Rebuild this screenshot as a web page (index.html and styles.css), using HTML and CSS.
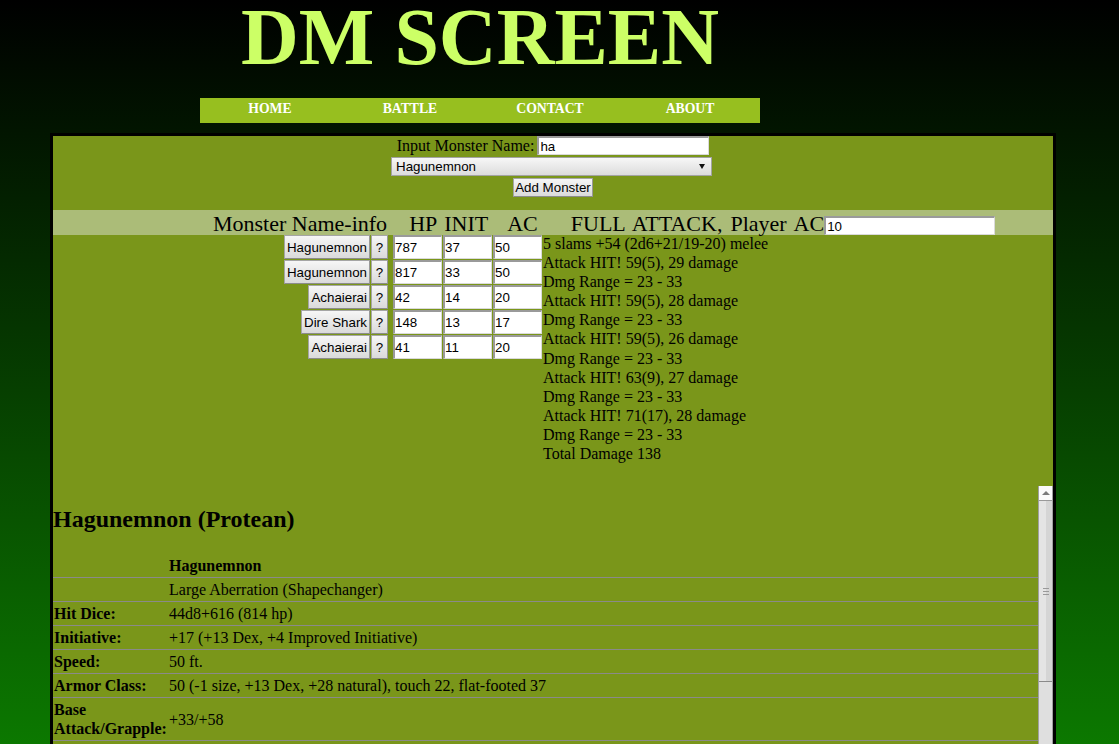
FILE: index.html
```html
<!DOCTYPE html>
<html lang="en">
<head>
<meta charset="utf-8">
<title>DM Screen</title>
<link rel="stylesheet" href="styles.css">
</head>
<body>
<header class="masthead">
  <h1 class="title">DM SCREEN</h1>
  <nav class="nav"><a href="#">HOME</a><a href="#">BATTLE</a><a href="#">CONTACT</a><a href="#">ABOUT</a></nav>
</header>
<main class="panel">
  <form class="add-form">
    <div class="form-row">
      <label for="mname" class="form-label">Input Monster Name:</label>
      <input id="mname" class="text-input name-input" type="text" value="ha">
    </div>
    <div class="form-row">
      <span class="select-wrap"><select class="monster-select"><option>Hagunemnon</option></select></span>
    </div>
    <div class="form-row">
      <button type="button" class="btn add-btn">Add Monster</button>
    </div>
  </form>
  <div class="head-strip"><span class="h-name">Monster Name-info</span><span class="h-hp">HP</span><span class="h-init">INIT</span><span class="h-ac">AC</span><span class="h-full">FULL ATTACK, Player AC</span><input class="text-input ac-input" type="text" value="10"></div>
  <div class="battle">
    <div class="roster">
      <div class="mrow"><button type="button" class="btn name-btn">Hagunemnon</button><button type="button" class="btn q-btn">?</button><input class="text-input stat-input hp" type="text" value="787"><input class="text-input stat-input" type="text" value="37"><input class="text-input stat-input" type="text" value="50"></div>
      <div class="mrow"><button type="button" class="btn name-btn">Hagunemnon</button><button type="button" class="btn q-btn">?</button><input class="text-input stat-input hp" type="text" value="817"><input class="text-input stat-input" type="text" value="33"><input class="text-input stat-input" type="text" value="50"></div>
      <div class="mrow"><button type="button" class="btn name-btn">Achaierai</button><button type="button" class="btn q-btn">?</button><input class="text-input stat-input hp" type="text" value="42"><input class="text-input stat-input" type="text" value="14"><input class="text-input stat-input" type="text" value="20"></div>
      <div class="mrow"><button type="button" class="btn name-btn">Dire Shark</button><button type="button" class="btn q-btn">?</button><input class="text-input stat-input hp" type="text" value="148"><input class="text-input stat-input" type="text" value="13"><input class="text-input stat-input" type="text" value="17"></div>
      <div class="mrow"><button type="button" class="btn name-btn">Achaierai</button><button type="button" class="btn q-btn">?</button><input class="text-input stat-input hp" type="text" value="41"><input class="text-input stat-input" type="text" value="11"><input class="text-input stat-input" type="text" value="20"></div>
    </div>
    <div class="attack-log">
      <div>5 slams +54 (2d6+21/19-20) melee</div>
      <div>Attack HIT! 59(5), 29 damage</div>
      <div>Dmg Range = 23 - 33</div>
      <div>Attack HIT! 59(5), 28 damage</div>
      <div>Dmg Range = 23 - 33</div>
      <div>Attack HIT! 59(5), 26 damage</div>
      <div>Dmg Range = 23 - 33</div>
      <div>Attack HIT! 63(9), 27 damage</div>
      <div>Dmg Range = 23 - 33</div>
      <div>Attack HIT! 71(17), 28 damage</div>
      <div>Dmg Range = 23 - 33</div>
      <div>Total Damage 138</div>
    </div>
  </div>
  <section class="stats">
    <div class="stat-view">
      <h2 class="stat-title">Hagunemnon (Protean)</h2>
      <table class="stat-table">
        <tr><th class="lbl"></th><th class="val">Hagunemnon</th></tr>
        <tr><th class="lbl"></th><td>Large Aberration (Shapechanger)</td></tr>
        <tr><th class="lbl">Hit Dice:</th><td>44d8+616 (814 hp)</td></tr>
        <tr><th class="lbl">Initiative:</th><td>+17 (+13 Dex, +4 Improved Initiative)</td></tr>
        <tr><th class="lbl">Speed:</th><td>50 ft.</td></tr>
        <tr><th class="lbl">Armor Class:</th><td>50 (-1 size, +13 Dex, +28 natural), touch 22, flat-footed 37</td></tr>
        <tr><th class="lbl">Base Attack/Grapple:</th><td>+33/+58</td></tr>
        <tr><th class="lbl">Attack:</th><td>Slam +54 melee (2d6+21/19-20)</td></tr>
        <tr><th class="lbl">Full Attack:</th><td>5 slams +54 melee (2d6+21/19-20)</td></tr>
        <tr><th class="lbl">Space/Reach:</th><td>10 ft./10 ft.</td></tr>
        <tr><th class="lbl">Special Attacks:</th><td>Improved grab, spell-like abilities</td></tr>
      </table>
    </div>
    <div class="fake-scroll" aria-hidden="true">
      <div class="sb-up"><span class="sb-arrow"></span></div>
      <div class="sb-thumb"><span class="sb-grip"></span></div>
      <div class="sb-track"></div>
    </div>
  </section>
</main>
</body>
</html>
```

FILE: styles.css
```css
html {
  margin: 0;
  overflow: hidden;
  background-color: #0c7e00;
  background-image: linear-gradient(to bottom, #000000 0px, #0c7e00 780px);
  background-size: 100% 780px;
  background-repeat: no-repeat;
}

body {
  margin: 0;
  font-family: "Liberation Serif", "Times New Roman", serif;
  font-size: 16px;
  color: #000;
}

.masthead {
  width: 560px;
  margin-left: 200px;
}

.title {
  margin: 0;
  font-size: 80px;
  line-height: 75px;
  font-weight: bold;
  color: #ccff66;
  text-align: center;
}

.nav {
  display: flex;
  margin-top: 23px;
  height: 25px;
  background: #97bf1f;
}

.nav a {
  width: 140px;
  text-align: center;
  color: #ffffff;
  font-weight: bold;
  font-size: 13.7px;
  line-height: 22px;
  text-decoration: none;
}

.panel {
  margin: 10px 0 0 50px;
  width: 1000px;
  border: 3px solid #000;
  background: #7a961a;
}

/* add form */
.add-form {
  margin: 0;
  padding-bottom: 13px;
}

.form-row {
  display: flex;
  justify-content: center;
  align-items: baseline;
}

.form-row + .form-row {
  margin-top: 2px;
}

.form-label {
  margin-right: 3px;
}

.text-input {
  box-sizing: border-box;
  margin: 0;
  padding: 0 1px;
  font-family: "Liberation Sans", Arial, sans-serif;
  font-size: 13.33px;
  color: #000;
  background: #fff;
  border-style: solid;
  border-width: 2px 1px 1px 2px;
  border-color: #9a9a9a #dadada #dadada #9a9a9a;
  border-radius: 0;
  outline: none;
}

.name-input {
  width: 172px;
  height: 19px;
}

.select-wrap {
  position: relative;
  display: inline-block;
  margin-right: 3px;
}

.select-wrap::after {
  content: "";
  position: absolute;
  right: 7px;
  top: 7px;
  width: 0;
  height: 0;
  border-left: 3.5px solid transparent;
  border-right: 3.5px solid transparent;
  border-top: 5px solid #111;
  pointer-events: none;
}

.monster-select {
  -webkit-appearance: none;
  appearance: none;
  display: block;
  box-sizing: border-box;
  width: 321px;
  height: 19px;
  margin: 0;
  padding: 0 0 0 4px;
  font-family: "Liberation Sans", Arial, sans-serif;
  font-size: 13.33px;
  color: #000;
  border: 1px solid #a3a3a3;
  border-radius: 0;
  background: linear-gradient(to bottom, #f7f7f7, #dcdcdc);
}

.btn {
  box-sizing: border-box;
  margin: 0;
  padding: 0 1px;
  font-family: "Liberation Sans", Arial, sans-serif;
  font-size: 13.33px;
  color: #000;
  border: 1px solid #a5a5a5;
  border-bottom-color: #8c8c8c;
  border-right-color: #999;
  border-radius: 0;
  background: linear-gradient(to bottom, #f6f6f6, #dadada);
}

.add-btn {
  height: 19px;
}

/* header strip */
.head-strip {
  box-sizing: border-box;
  height: 25px;
  padding: 2px 0 0 160px;
  background: #abbc78;
  font-size: 22px;
  line-height: 23px;
  white-space: nowrap;
}

.h-hp { margin-left: 22px; }
.h-init { margin-left: 7px; }
.h-ac { margin-left: 19px; }
.h-full { margin-left: 33px; word-spacing: 2.6px; }

.ac-input {
  width: 171px;
  height: 19px;
  vertical-align: bottom;
}

/* battle */
.battle {
  display: flex;
  align-items: flex-start;
}

.roster {
  width: 489px;
  margin-right: 1px;
  display: flex;
  flex-direction: column;
  align-items: flex-end;
  gap: 1px;
}

.mrow {
  display: flex;
  height: 24px;
}

.name-btn {
  height: 24px;
  padding: 0 2px;
}

.q-btn {
  width: 17px;
  height: 24px;
  margin-left: 1px;
  padding: 0;
}

.stat-input {
  width: 49px;
  height: 24px;
  margin-left: 1px;
  padding: 0;
}

.stat-input.hp {
  margin-left: 5px;
}

.attack-log {
  margin-top: -1px;
  line-height: 19.09px;
  white-space: nowrap;
}

/* stat block */
.stats {
  display: flex;
  margin-top: 23px;
  height: 300px;
}

.stat-view {
  flex: 1;
  min-width: 0;
  overflow: hidden;
}

.stat-title {
  margin: 20px 0 21px;
  font-size: 24px;
  font-weight: bold;
}

.stat-table {
  width: 100%;
  border-collapse: collapse;
}

.stat-table th,
.stat-table td {
  padding: 2px 1px;
  line-height: 19px;
  text-align: left;
  vertical-align: middle;
  border-bottom: 1px solid #8a8a8a;
}

.stat-table .lbl {
  width: 113px;
  font-weight: bold;
}

.fake-scroll {
  box-sizing: border-box;
  width: 15px;
  display: flex;
  flex-direction: column;
  border-left: 1px solid #a0a0a0;
  border-right: 1px solid #a0a0a0;
  background: #dfdfdf;
}

.sb-up {
  box-sizing: border-box;
  height: 15px;
  background: #fafafa;
  border-bottom: 1px solid #999;
  display: flex;
  align-items: center;
  justify-content: center;
}

.sb-arrow {
  width: 0;
  height: 0;
  border-left: 4px solid transparent;
  border-right: 4px solid transparent;
  border-bottom: 4px solid #7a7a7a;
}

.sb-thumb {
  box-sizing: border-box;
  height: 181px;
  border-bottom: 1px solid #8a8a8a;
  background: linear-gradient(to right, #e4e4e4 0 7px, #d5d5d5 7px 100%);
  display: flex;
  align-items: center;
  justify-content: center;
}

.sb-grip {
  width: 6px;
  height: 7px;
  background: repeating-linear-gradient(to bottom, #999 0 1px, transparent 1px 3px);
}

.sb-track {
  flex: 1;
  background: #dfdfdf;
}
```
